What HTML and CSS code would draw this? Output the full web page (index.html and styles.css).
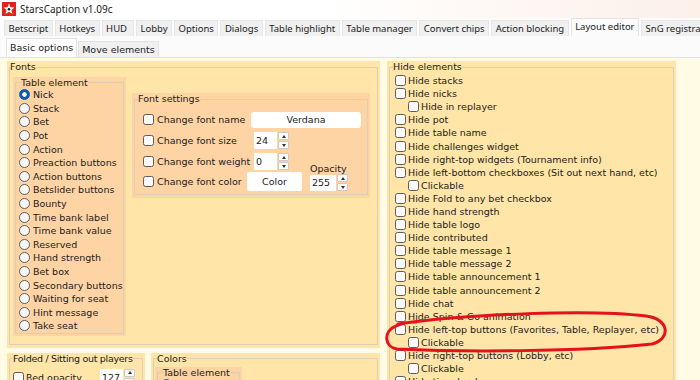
FILE: index.html
```html
<!DOCTYPE html>
<html lang="en">
<head>
    <meta charset="UTF-8">
    <title>StarsCaption v1.09c</title>
    <link rel="stylesheet" href="styles.css">
</head>
<body>
<div class="window">
    <div class="titlebar">
        <svg class="logo" width="14" height="14" viewBox="0 0 14 14">
            <rect width="14" height="14" fill="#e3211c"/>
            <polygon points="7,1.5 8.5,5.3 12.5,5.5 9.4,8 10.5,12 7,9.7 3.5,12 4.6,8 1.5,5.5 5.5,5.3" fill="#fff"/>
            <circle cx="7" cy="7.2" r="1.3" fill="#1a1a1a"/>
        </svg>
        <span>StarsCaption v1.09c</span>
    </div>

    <div class="tabs">
        <div class="tab">Betscript</div>
        <div class="tab">Hotkeys</div>
        <div class="tab">HUD&nbsp;</div>
        <div class="tab">Lobby</div>
        <div class="tab">Options</div>
        <div class="tab">Dialogs</div>
        <div class="tab">Table highlight</div>
        <div class="tab">Table manager</div>
        <div class="tab">Convert chips</div>
        <div class="tab">Action blocking</div>
        <div class="tab active">Layout editor</div>
        <div class="tab">SnG registration</div>
    </div>

    <div class="page">
        <div class="subtabs">
            <div class="subtab active">Basic options</div>
            <div class="subtab">Move elements</div>
        </div>

        <div class="content">
            <div class="left">
                <div class="box fonts">
                    <fieldset>
                        <legend>Fonts</legend>
                        <div class="fonts-body">
                            <div class="box peach elements">
                                <fieldset>
                                    <legend>Table element</legend>
                                    <div class="opt"><span class="radio checked"></span>Nick</div>
                                    <div class="opt"><span class="radio"></span>Stack</div>
                                    <div class="opt"><span class="radio"></span>Bet</div>
                                    <div class="opt"><span class="radio"></span>Pot</div>
                                    <div class="opt"><span class="radio"></span>Action</div>
                                    <div class="opt"><span class="radio"></span>Preaction buttons</div>
                                    <div class="opt"><span class="radio"></span>Action buttons</div>
                                    <div class="opt"><span class="radio"></span>Betslider buttons</div>
                                    <div class="opt"><span class="radio"></span>Bounty</div>
                                    <div class="opt"><span class="radio"></span>Time bank label</div>
                                    <div class="opt"><span class="radio"></span>Time bank value</div>
                                    <div class="opt"><span class="radio"></span>Reserved</div>
                                    <div class="opt"><span class="radio"></span>Hand strength</div>
                                    <div class="opt"><span class="radio"></span>Bet box</div>
                                    <div class="opt"><span class="radio"></span>Secondary buttons</div>
                                    <div class="opt"><span class="radio"></span>Waiting for seat</div>
                                    <div class="opt"><span class="radio"></span>Hint message</div>
                                    <div class="opt"><span class="radio"></span>Take seat</div>
                                </fieldset>
                            </div>

                            <div class="box peach font-settings">
                                <fieldset>
                                    <legend>Font settings</legend>
                                    <div class="fs-row">
                                        <div class="fs-label"><span class="cb"></span>Change font name</div>
                                        <div class="textbox">Verdana</div>
                                    </div>
                                    <div class="fs-row">
                                        <div class="fs-label"><span class="cb"></span>Change font size</div>
                                        <div class="spin narrow">
                                            <div class="spin-value">24</div>
                                            <div class="spin-btns"><span class="spin-btn up"></span><span class="spin-btn down"></span></div>
                                        </div>
                                    </div>
                                    <div class="fs-row">
                                        <div class="fs-label"><span class="cb"></span>Change font weight</div>
                                        <div class="spin narrow">
                                            <div class="spin-value">0</div>
                                            <div class="spin-btns"><span class="spin-btn up"></span><span class="spin-btn down"></span></div>
                                        </div>
                                    </div>
                                    <div class="fs-row last">
                                        <div class="fs-label"><span class="cb"></span>Change font color</div>
                                        <div class="button">Color</div>
                                        <div class="opacity">
                                            <div class="opacity-label">Opacity</div>
                                            <div class="spin">
                                                <div class="spin-value wide">255</div>
                                                <div class="spin-btns"><span class="spin-btn up"></span><span class="spin-btn down"></span></div>
                                            </div>
                                        </div>
                                    </div>
                                </fieldset>
                            </div>
                        </div>
                    </fieldset>
                </div>

                <div class="bottom">
                    <div class="box folded">
                        <fieldset>
                            <legend>Folded / Sitting out players</legend>
                            <div class="folded-row">
                                <div class="folded-label"><span class="cb"></span>Red opacity</div>
                                <div class="spin">
                                    <div class="spin-value">127</div>
                                    <div class="spin-btns"><span class="spin-btn up"></span><span class="spin-btn down"></span></div>
                                </div>
                            </div>
                        </fieldset>
                    </div>
                    <div class="box colors">
                        <fieldset>
                            <legend>Colors</legend>
                            <div class="box peach color-elements">
                                <fieldset>
                                    <legend>Table element</legend>
                                    <div class="opt"><span class="radio checked"></span>Nick</div>
                                </fieldset>
                            </div>
                        </fieldset>
                    </div>
                </div>
            </div>

            <div class="box hide">
                <fieldset>
                    <legend>Hide elements</legend>
                    <div class="chk"><span class="cb"></span>Hide stacks</div>
                    <div class="chk"><span class="cb"></span>Hide nicks</div>
                    <div class="chk sub"><span class="cb"></span>Hide in replayer</div>
                    <div class="chk"><span class="cb"></span>Hide pot</div>
                    <div class="chk"><span class="cb"></span>Hide table name</div>
                    <div class="chk"><span class="cb"></span>Hide challenges widget</div>
                    <div class="chk"><span class="cb"></span>Hide right-top widgets (Tournament info)</div>
                    <div class="chk"><span class="cb"></span>Hide left-bottom checkboxes (Sit out next hand, etc)</div>
                    <div class="chk sub"><span class="cb"></span>Clickable</div>
                    <div class="chk"><span class="cb"></span>Hide Fold to any bet checkbox</div>
                    <div class="chk"><span class="cb"></span>Hide hand strength</div>
                    <div class="chk"><span class="cb"></span>Hide table logo</div>
                    <div class="chk"><span class="cb"></span>Hide contributed</div>
                    <div class="chk"><span class="cb"></span>Hide table message 1</div>
                    <div class="chk"><span class="cb"></span>Hide table message 2</div>
                    <div class="chk"><span class="cb"></span>Hide table announcement 1</div>
                    <div class="chk"><span class="cb"></span>Hide table announcement 2</div>
                    <div class="chk"><span class="cb"></span>Hide chat</div>
                    <div class="chk"><span class="cb"></span>Hide Spin &amp; Go animation</div>
                    <div class="chk"><span class="cb"></span>Hide left-top buttons (Favorites, Table, Replayer, etc)</div>
                    <div class="chk sub"><span class="cb"></span>Clickable</div>
                    <div class="chk"><span class="cb"></span>Hide right-top buttons (Lobby, etc)</div>
                    <div class="chk sub"><span class="cb"></span>Clickable</div>
                    <div class="chk"><span class="cb"></span>Hide time bank</div>
                </fieldset>
            </div>
        </div>
    </div>

    <!-- hand drawn marker around the row -->
    <svg class="annotation" width="700" height="380" viewBox="0 0 700 380">
        <path d="M 398 324 C 470 314, 590 309, 646 316 C 670 319, 671 339, 652 344 C 580 352, 460 352, 397 349 C 384 347, 383 331, 396 326 C 402 323, 410 322, 416 322" fill="none" stroke="#e3131b" stroke-width="3" stroke-linecap="round"/>
    </svg>
</div>
</body>
</html>
```

FILE: styles.css
```css
body {
    margin: 0;
    font-family: "DejaVu Sans", Verdana, sans-serif;
    font-size: 9.5px;
    color: #1b1b1b;
    background: #fffbe4;
}

.window {
    position: relative;
    width: 700px;
    height: 380px;
    overflow: hidden;
}

/* title + main tabs */
.titlebar {
    height: 18px;
    display: flex;
    align-items: center;
    gap: 4px;
    padding-left: 2px;
    font-family: "Noto Sans", sans-serif;
    font-size: 10px;
    background: linear-gradient(90deg, #ffffff 45%, #fcf0e9);
}

.tabs {
    height: 18px;
    display: flex;
    align-items: flex-end;
    gap: 2px;
    padding-left: 4px;
    background: #fdfdfd;
    font-family: "Noto Sans", sans-serif;
    font-size: 9.5px;
}

.tab {
    box-sizing: border-box;
    height: 16px;
    line-height: 15px;
    padding: 0 3.5px;
    background: #f0f0f0;
    border: 1px solid #e6e6e6;
    border-bottom: none;
    white-space: nowrap;
}

.tab.active {
    height: 18px;
    line-height: 16px;
    background: #fbfbfb;
}

.page {
    background: #fbfbfb;
}

.subtabs {
    height: 21px;
    display: flex;
    align-items: flex-end;
    gap: 1px;
    padding-left: 6px;
    border-bottom: 1px solid #e2e2e2;
}

.subtab {
    box-sizing: border-box;
    height: 16px;
    line-height: 15px;
    padding: 0 3px;
    background: #f0f0f0;
    border: 1px solid #e2e2e2;
    border-bottom: none;
    white-space: nowrap;
}

.subtab.active {
    height: 19px;
    line-height: 17px;
    background: #ffffff;
}

/* content */
.content {
    display: flex;
    gap: 7px;
    height: 322px;
    padding: 3px 0 0 7px;
    background: #fffbe4;
}

.left {
    width: 373px;
    flex-shrink: 0;
    display: flex;
    flex-direction: column;
    gap: 5px;
}

.box {
    background: #ffe5a8;
    padding: 0 2px 3px;
}

.box.peach {
    background: #ffd4a5;
}

fieldset {
    margin: 0;
    min-width: 0;
    border: 1px solid #dccfb6;
    padding: 0 3px 2px;
}

legend {
    padding: 0;
    line-height: 12px;
    white-space: nowrap;
}

.fonts fieldset {
    padding-bottom: 8px;
}

.fonts > fieldset > legend {
    margin-left: -3px;
}

.fonts-body {
    display: flex;
    align-items: flex-start;
    gap: 6px;
    padding-top: 4px;
}

.elements {
    width: 113px;
    box-sizing: border-box;
    padding-bottom: 2px;
}

.elements fieldset {
    padding-bottom: 0;
}

.peach legend {
    line-height: 11px;
    margin-left: 2px;
}

.font-settings legend {
    line-height: 12px;
    margin-left: 0;
}

.opt {
    height: 13.6px;
    display: flex;
    align-items: center;
    gap: 3px;
    white-space: nowrap;
}

.radio {
    box-sizing: border-box;
    width: 11px;
    height: 11px;
    border: 1px solid #5c5c5c;
    border-radius: 50%;
    background: #f8f8f8;
    flex-shrink: 0;
}

.radio.checked {
    border-color: #0a58b0;
    background: radial-gradient(circle, #ffffff 0 2px, #0a5cb8 2.5px);
}

.cb {
    box-sizing: border-box;
    width: 11px;
    height: 11px;
    border: 1px solid #5c5c5c;
    border-radius: 2.5px;
    background: #f9f9f9;
    flex-shrink: 0;
}

/* font settings */
.font-settings {
    width: 238px;
    box-sizing: border-box;
    margin-top: 16px;
}

.font-settings fieldset {
    padding-top: 4px;
    padding-bottom: 3px;
}

.fs-row {
    height: 21px;
    display: flex;
    align-items: center;
    padding-left: 5px;
}

.fs-row.last {
    height: auto;
    align-items: flex-end;
}

.fs-label {
    width: 104px;
    height: 19px;
    display: flex;
    align-items: center;
    gap: 3px;
    white-space: nowrap;
    flex-shrink: 0;
}

.textbox {
    width: 110px;
    height: 16px;
    line-height: 16px;
    margin-left: 4px;
    text-align: center;
    background: #ffffff;
    border-radius: 3px;
}

.button {
    width: 55px;
    height: 19px;
    line-height: 19px;
    text-align: center;
    background: #ffffff;
    border-radius: 2px;
}

.spin {
    display: flex;
    align-items: center;
}

.spin.narrow {
    margin-left: 7px;
}

.spin-value {
    box-sizing: border-box;
    width: 23px;
    height: 17px;
    line-height: 17px;
    padding-left: 2px;
    background: #ffffff;
}

.spin-value.wide {
    width: 26px;
    height: 16px;
    line-height: 16px;
}

.spin-btns {
    display: flex;
    flex-direction: column;
    gap: 1px;
    margin-left: 1px;
}

.spin-btn {
    box-sizing: border-box;
    width: 11px;
    height: 8px;
    background: #fbfbfb;
    border: 1px solid #c9c9c9;
    border-radius: 1px;
    display: flex;
    align-items: center;
    justify-content: center;
}

.spin-btn::after {
    content: "";
    border-left: 2.5px solid transparent;
    border-right: 2.5px solid transparent;
}

.spin-btn.up::after {
    border-bottom: 3px solid #333;
}

.spin-btn.down::after {
    border-top: 3px solid #333;
}

.opacity {
    margin-left: 8px;
    margin-top: -10px;
}

.opacity-label {
    line-height: 10px;
}

/* bottom groups */
.bottom {
    display: flex;
    gap: 6px;
    align-items: flex-start;
}

.folded {
    width: 138px;
    box-sizing: border-box;
}

.folded legend {
    letter-spacing: -0.3px;
}

.folded-row {
    display: flex;
    align-items: center;
    padding-top: 4px;
}

.folded-label {
    width: 87px;
    display: flex;
    align-items: center;
    gap: 2px;
    white-space: nowrap;
}

.colors {
    width: 229px;
    box-sizing: border-box;
}

.colors > fieldset {
    padding-left: 1px;
}

.colors > fieldset > legend {
    margin-left: 2px;
}

.color-elements {
    width: 83px;
    margin-top: 2px;
}

/* hide elements */
.hide {
    width: 289px;
    flex-shrink: 0;
    box-sizing: border-box;
}

.hide fieldset {
    padding-left: 5px;
    padding-top: 1px;
}

.hide legend {
    margin-left: -2px;
}

.chk {
    height: 13.1px;
    display: flex;
    align-items: center;
    gap: 2px;
    white-space: nowrap;
}

.chk.sub {
    padding-left: 13px;
}

.annotation {
    position: absolute;
    left: 0;
    top: 0;
    pointer-events: none;
}
```
